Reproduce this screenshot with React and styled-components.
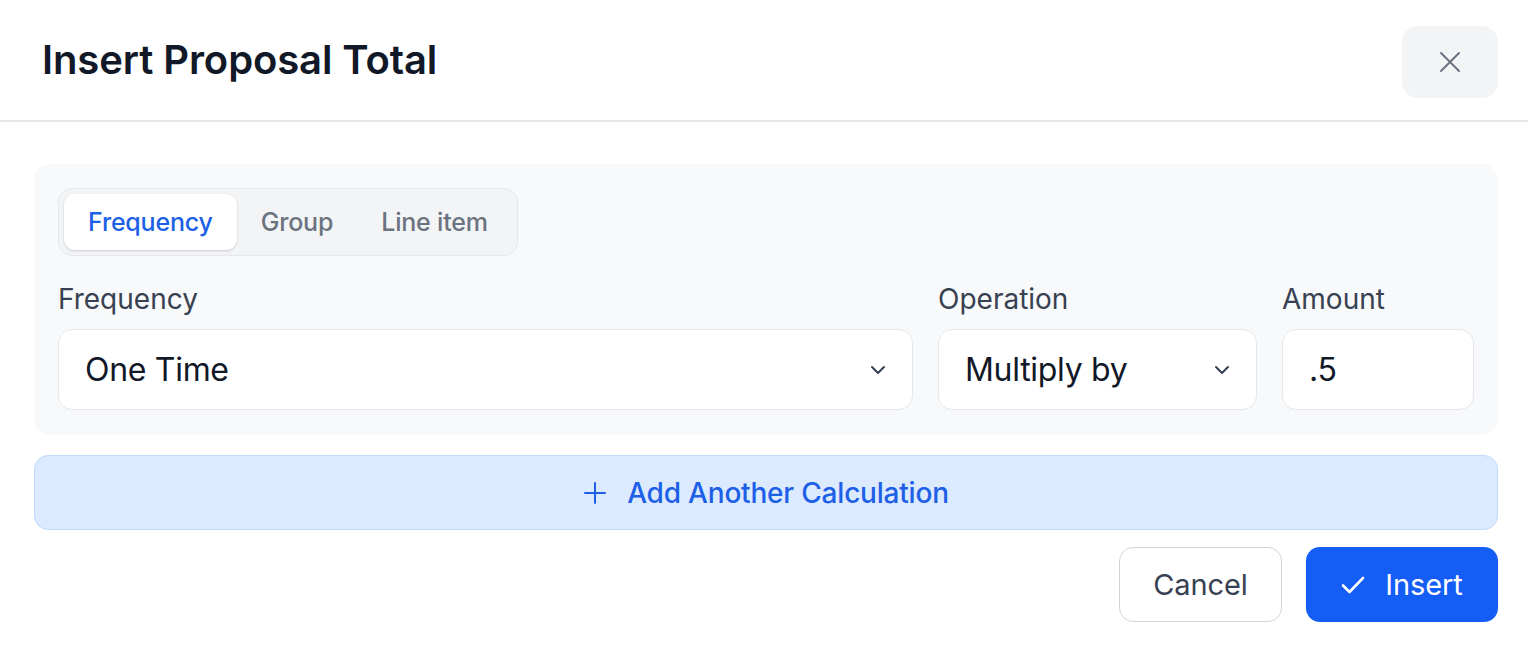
import React, { useState } from "react";
import styled, { createGlobalStyle } from "styled-components";

const GlobalStyle = createGlobalStyle`
  html, body {
    margin: 0;
    padding: 0;
    background: #ffffff;
  }
  body {
    font-family: Inter, "Noto Sans", sans-serif;
    color: #111827;
  }
`;

const Dialog = styled.div`
  width: 1528px;
  height: 646px;
  background: #ffffff;
  display: flex;
  flex-direction: column;
`;

const Header = styled.header`
  height: 122px;
  flex-shrink: 0;
  display: flex;
  align-items: center;
  justify-content: space-between;
  padding: 0 30px 1px 42px;
  border-bottom: 2px solid #e5e7eb;
  box-sizing: border-box;
`;

const Title = styled.h1`
  margin: 0;
  font-size: 40px;
  font-weight: 600;
  letter-spacing: -0.1px;
  color: #111827;
`;

const CloseButton = styled.button`
  width: 96px;
  height: 72px;
  border: none;
  border-radius: 16px;
  background: #f3f4f6;
  display: flex;
  align-items: center;
  justify-content: center;
  color: #6b7280;
  cursor: pointer;
  margin-top: 4px;
`;

const Body = styled.div`
  padding: 42px 30px 0 34px;
  display: flex;
  flex-direction: column;
  gap: 20px;
`;

const Panel = styled.section`
  background: #f8f9fb;
  border-radius: 16px;
  padding: 24px 24px 25px 24px;
  display: flex;
  flex-direction: column;
  gap: 26px;
`;

const TabList = styled.div`
  align-self: flex-start;
  display: flex;
  align-items: center;
  padding: 5px;
  background: #f3f4f6;
  border: 1px solid #e5e7eb;
  border-radius: 14px;
`;

const Tab = styled.button`
  height: 56px;
  padding: 0 24px;
  border: none;
  border-radius: 11px;
  font-family: inherit;
  font-size: 25px;
  font-weight: 500;
  letter-spacing: -0.2px;
  cursor: pointer;
  background: ${(p) => (p.$active ? "#ffffff" : "transparent")};
  color: ${(p) => (p.$active ? "#1d5fe6" : "#6b7280")};
  box-shadow: ${(p) =>
    p.$active ? "0 1px 3px rgba(16, 24, 40, 0.12), 0 1px 2px rgba(16,24,40,0.06)" : "none"};
`;

const FieldRow = styled.div`
  display: grid;
  grid-template-columns: 855px 319px 1fr;
  gap: 25px;
`;

const Field = styled.div`
  display: flex;
  flex-direction: column;
  gap: 13px;
`;

const Label = styled.label`
  font-size: 28px;
  font-weight: 400;
  color: #374151;
  line-height: 34px;
`;

const Control = styled.div`
  height: 81px;
  box-sizing: border-box;
  background: #ffffff;
  border: 1.5px solid #e5e7eb;
  border-radius: 14px;
  display: flex;
  align-items: center;
  justify-content: space-between;
  padding: 0 26px;
  font-size: 32px;
  color: #111827;
  letter-spacing: -0.3px;
`;

const AddButton = styled.button`
  height: 75px;
  border: 1.5px solid #bfdbfe;
  border-radius: 14px;
  background: #dbeafe;
  color: #1d5fe6;
  font-family: inherit;
  font-size: 28px;
  font-weight: 500;
  letter-spacing: -0.2px;
  display: flex;
  align-items: center;
  justify-content: center;
  gap: 20px;
  cursor: pointer;
`;

const Footer = styled.div`
  display: flex;
  justify-content: flex-end;
  gap: 24px;
  margin-top: -3px;
`;

const ActionButton = styled.button`
  height: 75px;
  box-sizing: border-box;
  border-radius: 14px;
  font-family: inherit;
  font-size: 29px;
  font-weight: 400;
  letter-spacing: -0.1px;
  display: flex;
  align-items: center;
  justify-content: center;
  gap: 20px;
  cursor: pointer;
  padding: 0;
  border: ${(p) => (p.$primary ? "none" : "1.5px solid #d1d5db")};
  background: ${(p) => (p.$primary ? "#155ef5" : "#ffffff")};
  color: ${(p) => (p.$primary ? "#ffffff" : "#374151")};
  width: ${(p) => (p.$primary ? "192px" : "163px")};
`;

const Chevron = () => (
  <svg width="16" height="10" viewBox="0 0 16 10" fill="none">
    <path d="M2 2l6 6 6-6" stroke="#374151" strokeWidth="2" strokeLinecap="round" strokeLinejoin="round" />
  </svg>
);

const tabs = ["Frequency", "Group", "Line item"];

export default function App() {
  const [active, setActive] = useState("Frequency");

  return (
    <>
      <GlobalStyle />
      <Dialog>
        <Header>
          <Title>Insert Proposal Total</Title>
          <CloseButton aria-label="Close">
            <svg width="22" height="22" viewBox="0 0 22 22" fill="none">
              <path d="M2 2l18 18M20 2L2 20" stroke="#6b7280" strokeWidth="2" strokeLinecap="round" />
            </svg>
          </CloseButton>
        </Header>
        <Body>
          <Panel>
            <TabList>
              {tabs.map((t) => (
                <Tab key={t} $active={active === t} onClick={() => setActive(t)}>
                  {t}
                </Tab>
              ))}
            </TabList>
            <FieldRow>
              <Field>
                <Label>Frequency</Label>
                <Control>
                  <span>One Time</span>
                  <Chevron />
                </Control>
              </Field>
              <Field>
                <Label>Operation</Label>
                <Control>
                  <span>Multiply by</span>
                  <Chevron />
                </Control>
              </Field>
              <Field>
                <Label>Amount</Label>
                <Control>
                  <span>.5</span>
                </Control>
              </Field>
            </FieldRow>
          </Panel>
          <AddButton>
            <svg width="24" height="24" viewBox="0 0 24 24" fill="none">
              <path d="M12 2v20M2 12h20" stroke="#1d5fe6" strokeWidth="2" strokeLinecap="round" />
            </svg>
            Add Another Calculation
          </AddButton>
          <Footer>
            <ActionButton>Cancel</ActionButton>
            <ActionButton $primary>
              <svg width="24" height="20" viewBox="0 0 24 20" fill="none">
                <path d="M2 10.5l6.5 6.5L22 3" stroke="#ffffff" strokeWidth="2.6" strokeLinecap="round" strokeLinejoin="round" />
              </svg>
              Insert
            </ActionButton>
          </Footer>
        </Body>
      </Dialog>
    </>
  );
}
